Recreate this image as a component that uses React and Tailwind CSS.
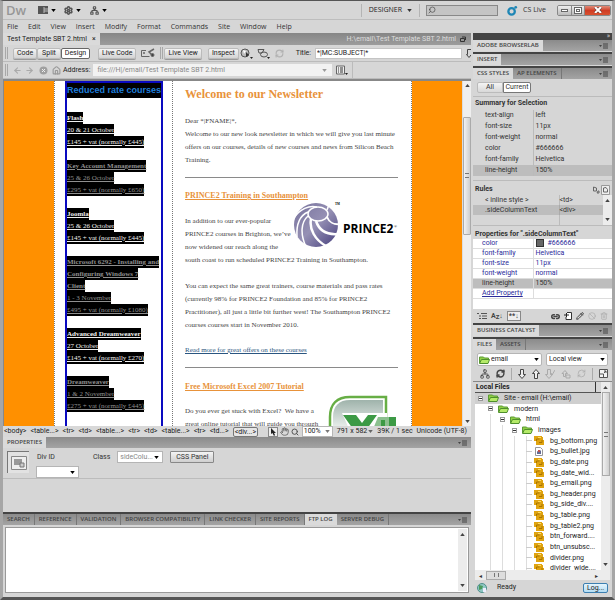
import { Settings, Network, Search, RefreshCw, ArrowLeft, ArrowRight, House, Hand, Link2, Pencil, Ban, Trash2 } from 'lucide-react'

const menus = ['File', 'Edit', 'View', 'Insert', 'Modify', 'Format', 'Commands', 'Site', 'Window', 'Help']

const courses = [
  { name: 'Flash', lines: ['20 & 21 October', '£145 + vat (normally £445)'] },
  { name: 'Key Account Management', dim: true, lines: ['25 & 26 October', '£295 + vat (normally £650)'] },
  { name: 'Joomla', lines: ['25 & 26 October', '£145 + vat (normally £445)'] },
  { name: 'Microsoft 6292 - Installing and|Configuring Windows 7|Client', dim: true, lines: ['1 - 3 November', '£495 + vat (normally £1080)'] },
  { name: 'Advanced Dreamweaver', lines: ['27 October', '£145 + vat (normally £270)'] },
  { name: 'Dreamweaver', dim: true, lines: ['1 & 2 November', '£275 + vat (normally £445)'] },
]

const tagPath = ['<body>', '<table...>', '<tr>', '<td>', '<table...>', '<tr>', '<td>', '<table...>', '<tr>', '<td...>']

const resultTabs = ['SEARCH', 'REFERENCE', 'VALIDATION', 'BROWSER COMPATIBILITY', 'LINK CHECKER', 'SITE REPORTS', 'FTP LOG', 'SERVER DEBUG']

const summary = [
  ['text-align', 'left'],
  ['font-size', '11px'],
  ['font-weight', 'normal'],
  ['color', '#666666'],
  ['font-family', 'Helvetica'],
  ['line-height', '150%'],
]

const properties = [
  ['color', '#666666'],
  ['font-family', 'Helvetica'],
  ['font-size', '11px'],
  ['font-weight', 'normal'],
  ['line-height', '150%'],
]

const subfolders = ['modern', 'html', 'images']

const files = [
  'bg_bottom.png', 'bg_bullet.jpg', 'bg_date.png', 'bg_date_wid...', 'bg_email.png', 'bg_header.png', 'bg_side_div....',
  'bg_table.png', 'bg_table2.png', 'btn_forward....', 'btn_unsubsc...', 'divider.png', 'divider_wide....',
]

function Caret({ className = 'text-black' }) {
  return (
    <svg viewBox="0 0 6 4" className={`h-[3px] w-[5px] shrink-0 ${className}`} aria-hidden="true">
      <path d="M0 0h6L3 4z" fill="currentColor" />
    </svg>
  )
}

function Grip() {
  return <span className="h-3 w-[3px] shrink-0 border-x border-[#a8a8a8]" />
}

function PanelMenu() {
  return (
    <button aria-label="Panel menu" className="ml-auto mr-1 flex items-center gap-px text-[#444]">
      <svg viewBox="0 0 9 6" className="h-[6px] w-[9px]">
        <path d="M0 2h3L1.500 4z" fill="currentColor" />
        <path d="M4 1h5M4 3h5M4 5h5" stroke="currentColor" />
      </svg>
    </button>
  )
}

function PanelTabs({ tabs, active }) {
  return (
    <div className="flex h-[11px] shrink-0 items-stretch bg-linear-to-b from-[#8b8b8b] to-[#a4a4a4] font-['Open_Sans',sans-serif] text-[6px] font-semibold leading-[11px]">
      {tabs.map((tab) => (
        <button
          key={tab}
          className={tab === active
            ? 'whitespace-nowrap bg-[#dadada] px-1 text-[#444]'
            : 'whitespace-nowrap border-r border-[#777] px-1 text-[#444]'}
        >
          {tab}
        </button>
      ))}
      <PanelMenu />
    </div>
  )
}

function Select({ label, value, className, children, caret }) {
  return (
    <span className={`flex items-center border border-[#b5b5b5] bg-white ${className}`}>
      {children}
      <select aria-label={label} className="min-w-0 flex-1 appearance-none bg-transparent outline-none">
        <option>{value}</option>
      </select>
      <Caret className={caret} />
    </span>
  )
}

function ScrollArrow({ up }) {
  return (
    <svg viewBox="0 0 6 4" className="h-[3px] w-[5px]" aria-hidden="true">
      <path d={up ? 'M0 4h6L3 0z' : 'M0 0h6L3 4z'} fill="#444" />
    </svg>
  )
}

function TitleBar() {
  return (
    <header className="flex h-[19px] shrink-0 items-center border-b border-[#bdbdbd] pl-[3px] pr-px font-['Open_Sans',sans-serif]">
      <span className="w-[32px] text-[13px] font-semibold leading-4 text-[#979797]">Dw</span>
      <button aria-label="Layout" className="flex w-[26px] items-center gap-[3px]">
        <svg viewBox="0 0 10 8" className="h-2 w-[10px]">
          <path d="M0 0h10v8H0z" fill="#555" />
          <path d="M6 1v6M6 3h4M6 5h4" stroke="#bbb" />
        </svg>
        <Caret />
      </button>
      <button aria-label="Extend" className="flex w-[26px] items-center gap-[3px]">
        <Settings size={9} strokeWidth={4} className="text-[#555]" />
        <Caret />
      </button>
      <button aria-label="Site" className="flex items-center gap-[3px]">
        <Network size={9} strokeWidth={3} className="text-[#555]" />
        <Caret />
      </button>
      <div className="ml-auto flex h-[13px] items-center border-x border-[#b4b4b4] px-[7px]">
        <button className="flex items-center gap-[5px] text-[7px] leading-3 text-[#222]">
          DESIGNER <Caret className="text-[#333]" />
        </button>
      </div>
      <label className="ml-[6px] flex h-[11px] w-[72px] items-center border border-[#888] bg-[#c4c4c4] pl-px">
        <Search size={8} className="-scale-x-100 text-[#444]" />
        <input aria-label="Search" className="min-w-0 flex-1 bg-transparent text-[7px] outline-none" />
      </label>
      <button className="ml-[9px] flex items-center gap-[5px] text-[7px] leading-3 text-[#333]">
        <svg viewBox="0 0 12 12" className="size-[11px]">
          <circle cx="5" cy="7" r="3.500" fill="none" stroke="#1e86b5" strokeWidth="2.500" />
          <circle cx="9.500" cy="2.500" r="1.500" fill="#1e86b5" />
        </svg>
        CS Live
      </button>
      <div className="ml-[11px] flex h-[11px] overflow-hidden rounded-[2px] border border-[#888]">
        <button aria-label="Minimize" className="flex w-[14px] items-center justify-center border-r border-[#888] bg-linear-to-b from-[#eee] to-[#bbb]">
          <span className="h-[3px] w-[7px] border border-[#666] bg-white" />
        </button>
        <button aria-label="Restore" className="flex w-[13px] items-center justify-center border-r border-[#888] bg-linear-to-b from-[#eee] to-[#bbb]">
          <span className="flex h-[7px] w-2 items-center justify-center border border-[#666] bg-white">
            <span className="h-[3px] w-1 border border-[#666]" />
          </span>
        </button>
        <button aria-label="Close" className="flex w-[25px] items-center justify-center bg-linear-to-b from-[#e08a78] via-[#cf3c25] to-[#d8502f]">
          <svg viewBox="0 0 8 6" className="h-[6px] w-2">
            <path d="M1 0l6 6M7 0L1 6" stroke="#533" strokeWidth="3" />
            <path d="M1 0l6 6M7 0L1 6" stroke="#fff" strokeWidth="2" />
          </svg>
        </button>
      </div>
    </header>
  )
}

const toolButton = 'h-[11px] rounded-[2px] border border-[#bbb] bg-linear-to-b from-[#f4f4f4] to-[#d4d4d4] px-[3px] leading-[9px] whitespace-nowrap shadow-[0_1px_0_#999]'

function DocumentToolbar() {
  return (
    <div className="flex h-[17px] shrink-0 items-center overflow-hidden border-b border-[#bbb] pl-[2px]">
      <Grip />
      <div className="ml-[5px] flex">
        <button className={`w-6 ${toolButton}`}>Code</button>
        <button className={`w-6 ${toolButton}`}>Split</button>
        <button className="h-[11px] w-[29px] whitespace-nowrap rounded-[2px] border border-[#666] bg-white leading-[9px]">Design</button>
      </div>
      <button className={`ml-[8px] ${toolButton}`}>Live Code</button>
      <svg viewBox="0 0 14 10" className="ml-[5px] h-[10px] w-[14px] shrink-0" fill="none" stroke="#666">
        <path d="M5 2.500H.5v6h8" />
        <path d="M2 5h2M13 1L8 4l4 4" strokeWidth="1.500" />
        <circle cx="11.500" cy="7" r="1.500" fill="#444" />
      </svg>
      <span className="ml-[5px] flex"><Grip /></span>
      <button className={`ml-px ${toolButton}`}>Live View</button>
      <button className={`ml-[6px] ${toolButton}`}>Inspect</button>
      <svg viewBox="0 0 13 11" className="ml-px h-[11px] w-[13px] shrink-0">
        <circle cx="5" cy="5" r="4" fill="#bbb" stroke="#555" />
        <path d="M3 2l3 1-2 3z" fill="#fff" />
        <path d="M6 4l3 3-3 2z" fill="#333" />
        <path d="M10 9h3l-1.500 2z" fill="#222" />
      </svg>
      <svg viewBox="0 0 13 11" className="ml-1 h-[11px] w-[13px] shrink-0" fill="none" stroke="#555">
        <path d="M1 1.500h6L5 5H2z" />
        <ellipse cx="7" cy="6.500" rx="3.500" ry="2.500" />
        <path d="M10 9h3l-1.500 2z" fill="#222" stroke="none" />
      </svg>
      <RefreshCw size={9} strokeWidth={3} className="ml-[5px] shrink-0 text-[#b0b0b0]" />
      <label className="ml-auto flex items-center gap-1 pl-2">
        Title:
        <input defaultValue="*|MC:SUBJECT|*" className="h-[11px] w-[147px] border border-[#c4c4c4] bg-white px-px text-[7px] outline-none" />
      </label>
      <svg viewBox="0 0 5 9" className="ml-1 h-[9px] w-[5px] shrink-0" fill="none" stroke="#444">
        <path d="M1.500.5v5H.5L3 8.500 5 6M1.500.5H5" />
      </svg>
    </div>
  )
}

function AddressBar() {
  return (
    <div className="flex h-[17px] shrink-0 items-center border-b border-[#bbb] pl-[2px]">
      <Grip />
      <button aria-label="Back" className="ml-[5px]"><ArrowLeft size={9} className="text-[#aaa]" strokeWidth={3} /></button>
      <button aria-label="Forward" className="ml-[3px]"><ArrowRight size={9} className="text-[#aaa]" strokeWidth={3} /></button>
      <svg viewBox="0 0 9 9" className="ml-[5px] size-[9px]">
        <circle cx="4.500" cy="4.500" r="4" fill="#a0a0a0" />
        <path d="M3 3l3 3M6 3L3 6" stroke="#eee" />
      </svg>
      <button aria-label="Home" className="ml-[4px]"><House size={9} className="text-[#999]" strokeWidth={3} /></button>
      <label className="ml-[2px] flex items-center gap-[3px]">
        Address:
        <input defaultValue="file:///H|/email/Test Template SBT 2.html" className="h-[12px] w-[229px] bg-[#f2f2f2] px-1 text-[7px] text-[#888] outline-none" />
      </label>
      <span className="flex h-[12px] w-[10px] items-center justify-start bg-[#f2f2f2]"><Caret className="text-[#999]" /></span>
      <svg viewBox="0 0 12 10" className="ml-1 h-[10px] w-3">
        <path d="M.5 1h8v8h-8z" fill="#eee" stroke="#666" />
        <path d="M2 3h1m1 0h3M2 5h1m1 0h3M2 7h1m1 0h3" stroke="#333" />
        <path d="M9 8h3l-1.500 2z" fill="#222" />
      </svg>
      <span className="ml-1 h-full w-px bg-[#bbb]" />
    </div>
  )
}

function PrinceLogo() {
  return (
    <svg viewBox="0 0 105 45" className="float-right -ml-5 h-[45px] w-[105px]" role="img" aria-label="PRINCE2">
      <defs>
        <linearGradient id="globe" x1="0" y1="0" x2="1" y2="1">
          <stop offset="0" stopColor="#77729c" />
          <stop offset=".5" stopColor="#9590b4" />
          <stop offset="1" stopColor="#443d7c" />
        </linearGradient>
      </defs>
      <circle cx="23" cy="23" r="22" fill="url(#globe)" />
      <g fill="none" stroke="#fff" strokeWidth="1.500">
        <ellipse cx="25" cy="12" rx="10" ry="7" />
        <path d="M15 10C8 13 3 20 4 35" />
        <path d="M15 14C8 20 7 32 13 45" />
        <path d="M18 17C16 27 22 38 33 44" strokeWidth="2.500" />
        <path d="M23 19C26 28 33 33 45 32" strokeWidth="2.500" />
        <path d="M34 15C36 20 41 23 47 22" strokeWidth="2" />
        <path d="M24 5C16 3 7 7 1 16" />
        <path d="M34 8L37 0" />
      </g>
      <path d="M36 0l11 14V0z" fill="#fff" />
      <text x="42" y="3" fontSize="3" fontWeight="700">TM</text>
      <text x="50" y="31" fontSize="12" fontWeight="700" className="font-['Open_Sans',sans-serif]">PRINCE2</text>
      <text x="101" y="26" fontSize="4">®</text>
    </svg>
  )
}

function ExcelLogo() {
  return (
    <svg viewBox="0 0 70 34" className="float-right -ml-5 mt-[2px] h-[34px] w-[70px]" role="img" aria-label="Excel">
      <defs>
        <linearGradient id="sheet" x1="0" y1="0" x2="0" y2="1">
          <stop offset="0" stopColor="#9fb3ab" />
          <stop offset="1" stopColor="#f3f6f4" />
        </linearGradient>
      </defs>
      <path d="M2 36V22C2 9 9 2 22 2h36v34z" fill="#fff" stroke="#67ae45" strokeWidth="2.500" />
      <path d="M5 36V22C5 11 11 5 22 5h33v31z" fill="url(#sheet)" />
      <path d="M14 18h45v18H22z" fill="#fff" />
      <path d="M15 20h13l6 8 6-8h9L39 34H25z" fill="#3c9a45" />
      <path d="M50 22h18v12H45z" fill="#8cc08f" />
      <path d="M53 25h4v6h-4zM61 22h7v9h-7z" fill="#3c9a45" />
    </svg>
  )
}

function Sidebar() {
  return (
    <div className="ml-[10px] w-[98px] shrink-0 overflow-hidden border-2 border-b-0 border-[#0a0ac0]">
      <h2 className="mb-[14px] h-[15px] whitespace-nowrap bg-black font-['Liberation_Sans',Arial,sans-serif] text-[9px] font-bold leading-[15px] text-[#1f7fdc]">
        Reduced rate courses
      </h2>
      {courses.map((course) => (
        <p key={course.name} className={course.dim ? 'mb-3 text-[7px] leading-3 text-[#8f8f8f]' : 'mb-3 text-[7px] leading-3 text-[#f0f0f0]'}>
          {course.name.split('|').map((part) => (
            <span key={part} className="block w-fit whitespace-nowrap bg-black font-bold underline">
              {part}
            </span>
          ))}
          {course.lines.map((line) => (
            <span key={line} className="block w-fit whitespace-nowrap bg-black underline">{line}</span>
          ))}
        </p>
      ))}
    </div>
  )
}

function Newsletter() {
  return (
    <article className="ml-[9px] w-[238px] shrink-0 border-l border-dotted border-[#777] pl-3 pr-3 text-[7px] leading-[13px] text-[#444]">
      <h1 className="mb-[13px] mt-[5px] text-[12px] font-bold leading-4 text-[#e8923a]">Welcome to our Newsletter</h1>
      <p className="whitespace-nowrap">
        Dear *|FNAME|*,<br />
        Welcome to our new look newsletter in which we will give you last minute<br />
        offers on our courses, details of new courses and news from Silicon Beach<br />
        Training.
      </p>
      <hr className="mb-[11px] mt-[10px] border-[#8a8a8a]" />
      <h2 className="whitespace-nowrap text-[8px] font-bold">
        <a href="#prince2" className="text-[#e8923a] underline">PRINCE2 Training in Southampton</a>
      </h2>
      <PrinceLogo />
      <p className="mt-[13px] whitespace-nowrap">
        In addition to our ever-popular<br />
        PRINCE2 courses in Brighton, we’ve<br />
        now widened our reach along the<br />
        south coast to run scheduled PRINCE2 Training in Southampton.
      </p>
      <p className="mt-[13px] whitespace-nowrap">
        You can expect the same great trainers, course materials and pass rates<br />
        (currently 98% for PRINCE2 Foundation and 85% for PRINCE2<br />
        Practitioner), all just a little bit further west! The Southampton PRINCE2<br />
        courses courses start in November 2010.
      </p>
      <a href="#offers" className="mt-3 block text-[#2a5580] underline">Read more for great offers on these courses</a>
      <hr className="mb-3 mt-[10px] border-[#8a8a8a]" />
      <h2 className="whitespace-nowrap text-[8px] font-bold">
        <a href="#excel" className="text-[#e8923a] underline">Free Microsoft Excel 2007 Tutorial</a>
      </h2>
      <ExcelLogo />
      <p className="mt-3 whitespace-nowrap">
        Do you ever get stuck with Excel?&nbsp; We have a<br />
        great online tutorial that will guide you through
      </p>
    </article>
  )
}

function DesignView() {
  return (
    <div className="flex min-h-0 flex-1 border-l border-t-2 border-[#888] bg-white">
      <div className="flex min-w-0 flex-1 overflow-hidden font-['Liberation_Serif','Times_New_Roman',serif]">
        <div className="flex-1 bg-[#ff9000]" />
        <div className="flex w-[358px] shrink-0 overflow-hidden border-x border-dotted border-[#777]">
          <Sidebar />
          <Newsletter />
        </div>
        <div className="flex-1 bg-[#ff9000]" />
      </div>
      <div className="flex w-[9px] shrink-0 flex-col items-center justify-between border-l border-[#ddd] bg-[#efefef] py-[3px]">
        <ScrollArrow up />
        <div className="mb-[156px] flex h-[118px] w-2 items-center justify-center rounded-[1px] border border-[#aaa] bg-linear-to-r from-[#f2f2f2] to-[#cfcfcf]">
          <span className="h-[5px] w-1 border-y border-[#777]" />
        </div>
        <ScrollArrow />
      </div>
    </div>
  )
}

function StatusBar() {
  return (
    <div className="flex h-[11px] shrink-0 items-center gap-1 overflow-hidden whitespace-nowrap bg-[#d8d8d8] px-px text-[7px] leading-[11px] text-[#222]">
      {tagPath.map((tag, i) => <button key={i}>{tag}</button>)}
      <button className="h-[10px] rounded-[2px] border border-[#777] bg-[#e6e6e6] px-px leading-[8px]">{'<div...>'}</button>
      <div className="ml-auto flex items-center gap-[2px]">
        <button aria-label="Select" className="flex size-[10px] items-center justify-center border border-[#888] bg-[#eee]">
          <svg viewBox="0 0 6 8" className="h-2 w-[6px]"><path d="M1 0v6l1.500-1L4 8l1-1-1-2h2z" fill="#222" /></svg>
        </button>
        <Hand size={9} className="text-[#555]" />
        <Search size={8} strokeWidth={3} className="text-[#555]" />
        <Select label="Zoom" value="100%" className="ml-px h-[11px] w-[31px] pl-px pr-[2px]" caret="text-[#777]" />
      </div>
      <span className="flex items-center gap-px">791 x 582 <Caret className="text-[#666]" /></span>
      <span>39K / 1 sec</span>
      <span className="mr-[3px]">Unicode (UTF-8)</span>
    </div>
  )
}

function PropertiesPanel() {
  return (
    <section>
      <PanelTabs tabs={['PROPERTIES']} active="PROPERTIES" />
      <div className="flex h-[31px] border-b border-[#bcbcbc] px-1 pt-[3px] text-[7px] leading-[12px] text-[#333]">
        <div className="flex size-[22px] items-center justify-center border-l border-t border-[#777] bg-[#e2e2e2]">
          <svg viewBox="0 0 16 14" className="h-[14px] w-4">
            <path d="M.5.5h15v13H.5z" fill="#eee" stroke="#888" />
            <path d="M3 3h8v6H3z" fill="#999" />
            <path d="M9 7h4v4H9z" fill="#ccc" stroke="#777" />
          </svg>
        </div>
        <div className="ml-[7px] w-[43px]">
          <span className="block pl-px">Div ID</span>
          <Select label="Div ID" value="" className="mt-[3px] h-3 px-px pr-[3px]" />
        </div>
        <div className="ml-[14px] flex h-3 items-center gap-[7px]">
          Class
          <Select label="Class" value="sideColu..." className="h-3 w-[46px] pl-[2px] pr-[3px] text-[#888]" />
        </div>
        <button className="ml-[7px] h-3 whitespace-nowrap rounded-[1px] border border-[#888] bg-linear-to-b from-[#f4f4f4] to-[#cfcfcf] px-[5px] leading-[10px]">
          CSS Panel
        </button>
      </div>
      <div className="h-[33px]" />
    </section>
  )
}

function Results() {
  return (
    <section className="flex h-[83px] shrink-0 flex-col border-t-2 border-[#444]">
      <PanelTabs tabs={resultTabs} active="FTP LOG" />
      <div className="m-[2px] flex flex-1 border border-[#999] bg-white">
        <textarea aria-label="FTP log" className="min-w-0 flex-1 resize-none outline-none" />
        <div className="my-px mr-px flex w-[9px] flex-col items-center justify-between bg-[#ececec] py-1">
          <ScrollArrow up />
          <ScrollArrow />
        </div>
      </div>
    </section>
  )
}

function CssStyles() {
  return (
    <section className="text-[7px] text-[#333]">
      <PanelTabs tabs={['CSS STYLES', 'AP ELEMENTS']} active="CSS STYLES" />
      <div className="flex h-[18px] items-center border-b border-[#bbb] pl-1">
        <button className="h-[11px] w-[26px] rounded-l-[2px] border border-[#bbb] bg-linear-to-b from-[#f4f4f4] to-[#d8d8d8] leading-[9px]">All</button>
        <button className="h-[11px] w-[28px] rounded-r-[2px] border border-[#777] bg-white leading-[9px]">Current</button>
      </div>
      <h3 className="px-[2px] font-bold leading-3">Summary for Selection</h3>
      <table className="mb-1 mt-px w-full border-collapse leading-[11px]">
        <tbody>
          {summary.map(([name, value]) => (
            <tr key={name} className={name === 'line-height' ? 'bg-[#bdbdbd]' : ''}>
              <td className="w-[60px] border-r border-[#bbb] py-0 pl-3">{name}</td>
              <td className="py-0 pl-[2px]">{value}</td>
            </tr>
          ))}
        </tbody>
      </table>
      <div className="flex h-[15px] items-end border-t border-[#bbb] px-[2px]">
        <h3 className="font-bold leading-[11px]">Rules</h3>
        <svg viewBox="0 0 18 10" className="ml-auto h-[10px] w-[18px]" fill="none" stroke="#666">
          <path d="M1.500 2v4h3V3zM6 6h1v2H5z" />
          <path d="M9.500.5h8v9h-8z" fill="#eee" stroke="#999" />
          <path d="M11.500 3v4h4V4.500l-1.500-2z" />
        </svg>
      </div>
      <div className="flex">
        <table className="flex-1 border-collapse leading-[10px]">
          <tbody>
            <tr>
              <td className="w-[86px] border-r border-[#bbb] py-0 pl-3">{'< inline style >'}</td>
              <td className="py-0">{'<td>'}</td>
            </tr>
            <tr className="bg-[#bdbdbd]">
              <td className="border-r border-[#aaa] py-0 pl-3">.sideColumnText</td>
              <td className="py-0">{'<div>'}</td>
            </tr>
            <tr className="h-[10px]">
              <td className="border-r border-[#bbb] p-0" />
              <td className="p-0" />
            </tr>
          </tbody>
        </table>
        <div className="flex w-[9px] flex-col items-center justify-between bg-[#ececec] py-1">
          <ScrollArrow up />
          <ScrollArrow />
        </div>
      </div>
      <h3 className="border-t border-[#bbb] px-[2px] pt-[3px] font-bold leading-[10px]">Properties for ".sideColumnText"</h3>
      <div className="h-[70px] bg-white">
        <table className="w-full border-collapse leading-[9px] text-[#2b2b9a]">
          <tbody>
            {properties.map(([name, value]) => (
              <tr key={name} className={name === 'line-height' ? 'border-b border-[#ddd] bg-[#bdbdbd] text-[#333]' : 'border-b border-[#ddd]'}>
                <td className="w-[60px] border-r border-[#ddd] py-0 pl-[9px]">{name}</td>
                <td className="py-0 pl-[2px]">
                  {name === 'color' && <span className="mr-1 inline-block h-2 w-2 border border-[#333] bg-[#666] align-middle" />}
                  {value}
                </td>
              </tr>
            ))}
            <tr className="border-b border-[#ddd]">
              <td className="border-r border-[#ddd] py-0 pl-[9px]"><a href="#add" className="underline">Add Property</a></td>
              <td />
            </tr>
          </tbody>
        </table>
      </div>
      <div className="flex h-[14px] items-center gap-1 px-1 text-[#444]">
        <svg viewBox="0 0 10 8" className="h-2 w-[10px]" stroke="#555">
          <path d="M0 1.500h2m2 0h6M2 4h2m1 0h5M2 6.500h2m1 0h5" />
        </svg>
        <span className="font-bold">A<sub className="text-[6px]">Z</sub>↓</span>
        <span className="h-[10px] border border-[#888] bg-[#eee] px-px font-bold leading-[8px]">**↓</span>
        <div className="ml-auto flex items-center gap-1">
          <Link2 size={9} strokeWidth={4} />
          <svg viewBox="0 0 8 8" className="size-2"><path d="M3 .5h4.500v7H2V5" fill="#fff" stroke="#333" /><path d="M0 3h5M2.500 1v4" stroke="#222" /></svg>
          <Pencil size={8} strokeWidth={3} />
          <Ban size={8} className="text-[#aaa]" />
          <Trash2 size={8} className="text-[#aaa]" />
        </div>
      </div>
    </section>
  )
}

function FolderIcon() {
  return (
    <svg viewBox="0 0 11 8" className="h-2 w-[11px] shrink-0" aria-hidden="true">
      <path d="M.5 7V1h4l1 1h4v2" fill="#8fcf45" stroke="#5c9a35" />
      <path d="M.5 7.500L2.500 3.500h8l-1.500 4z" fill="#b5ea68" stroke="#4f8f2c" />
    </svg>
  )
}

function FileIcon({ jpg }) {
  if (jpg) {
    return (
      <svg viewBox="0 0 10 9" className="h-[9px] w-[10px] shrink-0" aria-hidden="true">
        <path d="M1.500.5h5l2 2v6h-7z" fill="#fff" stroke="#999" />
        <path d="M3 7V4l2 1 2-2v4z" fill="#636a94" />
        <path d="M4 3h2v2H4z" fill="#c0504d" />
      </svg>
    )
  }
  return (
    <svg viewBox="0 0 10 9" className="h-[9px] w-[10px] shrink-0" aria-hidden="true">
      <path d="M0 0h8v1h1v3h1v5H2V5H0z" fill="#e0a410" />
      <path d="M2.500 5V3h3M5 6.500h3V4" fill="none" stroke="#a87400" />
      <path d="M4 1h3v1H4z" fill="#ffdc60" />
    </svg>
  )
}

function Guides({ count }) {
  return Array.from({ length: count }, (_, i) => (
    <span key={i} className="w-3 shrink-0 self-stretch border-l border-[#ddd]" />
  ))
}

function Expander({ name }) {
  return (
    <button aria-label={`Collapse ${name}`} className="-ml-[2px] mr-[5px] flex size-[5px] shrink-0 items-center justify-center border border-[#999] bg-white">
      <span className="h-px w-[3px] bg-[#333]" />
    </button>
  )
}

function FilesPanel() {
  return (
    <section className="flex min-h-0 flex-1 flex-col text-[7px] text-[#222]">
      <PanelTabs tabs={['FILES', 'ASSETS']} active="FILES" />
      <div className="flex gap-1 px-1 pt-[3px]">
        <Select label="Site" value="email" className="h-[13px] flex-1 gap-px rounded-[2px] px-px pr-[2px]"><FolderIcon /></Select>
        <Select label="View" value="Local view" className="h-[13px] w-[62px] rounded-[2px] px-[2px]" />
      </div>
      <div className="flex h-[16px] items-center justify-between border-b border-[#888] pl-[7px] pr-1 text-[#444]">
        <Network size={10} strokeWidth={2} />
        <RefreshCw size={9} strokeWidth={4} />
        <span className="h-3 w-px bg-[#aaa]" />
        <svg viewBox="0 0 8 10" className="h-[10px] w-2" fill="#eee" stroke="#444"><path d="M2.500.5h3v5h2L4 9.500.5 5.500h2z" /></svg>
        <svg viewBox="0 0 8 10" className="h-[10px] w-2" fill="#eee" stroke="#444"><path d="M2.500 9.500h3v-5h2L4 .5.5 4.500h2z" /></svg>
        <svg viewBox="0 0 10 10" className="size-[10px]" fill="none" stroke="#aaa"><path d="M2.500.5h3v5h2L4 9.500.5 5.500h2zM6 4l1 2 3-5" /></svg>
        <svg viewBox="0 0 10 10" className="size-[10px]" fill="none" stroke="#aaa"><path d="M2.500 7.500h2v-3h2L4 1.500 1 4.500h1.500zM5 6h4v3H5z" /></svg>
        <RefreshCw size={9} className="text-[#aaa]" />
        <span className="h-3 w-px bg-[#aaa]" />
        <svg viewBox="0 0 9 9" className="size-[9px]" fill="#f4f4f4" stroke="#555"><path d="M.5.5h8v8h-8zM.5 5h4v3.500M5 4l2-2H5M7 2v2" /></svg>
      </div>
      <div className="mx-[2px] flex min-h-0 flex-1 bg-white">
        <div className="flex min-w-0 flex-1 flex-col overflow-hidden">
          <div className="flex h-[11px] shrink-0 border-b border-[#555] bg-[#d6d6d6] px-px font-bold leading-[10px]">
            <span className="flex-1">Local Files</span>
            <span className="mr-1 w-px bg-[#333]" />
          </div>
          <ul className="-mb-1 flex min-h-0 flex-1 flex-col whitespace-nowrap">
            <li className="flex min-h-0 flex-1 items-center bg-[#cfcfcf] pl-[5px]">
              <Expander name="site" />
              <FolderIcon />
              <span className="ml-[5px]">Site - email (H:\email)</span>
            </li>
            {subfolders.map((name, i) => (
              <li key={name} className="flex min-h-0 flex-1 items-center pl-[15px]">
                <Guides count={i} />
                <Expander name={name} />
                <FolderIcon />
                <span className="ml-[5px]">{name}</span>
              </li>
            ))}
            {files.map((name) => (
              <li key={name} className="flex min-h-0 flex-1 items-center pl-[15px]">
                <Guides count={4} />
                <span className="-ml-3 mr-[2px] h-px w-[6px] bg-[#ccc]" />
                <FileIcon jpg={name.endsWith('.jpg')} />
                <span className="ml-[6px]">{name}</span>
              </li>
            ))}
          </ul>
        </div>
        <div className="flex w-[9px] shrink-0 flex-col items-center bg-[#ececec] py-1">
          <ScrollArrow up />
          <div className="mt-[3px] flex h-[84px] w-2 items-center justify-center border border-[#aaa] bg-linear-to-r from-[#f2f2f2] to-[#cfcfcf]">
            <span className="h-[5px] w-1 border-y border-[#777]" />
          </div>
          <span className="flex-1" />
          <ScrollArrow />
        </div>
      </div>
      <div className="mx-[2px] flex h-[10px] shrink-0 items-center bg-[#ececec] px-1 text-[6px] text-[#333]">
        <span>◂</span>
        <span className="ml-1 flex h-[9px] w-5 items-center justify-center border border-[#aaa] bg-[#ddd]">
          <span className="h-1 w-[5px] border-x border-[#777]" />
        </span>
        <span className="ml-auto mr-2">▸</span>
      </div>
      <div className="flex h-[15px] shrink-0 items-center px-1">
        <svg viewBox="0 0 10 10" className="size-[10px]">
          <circle cx="5" cy="5" r="4.500" fill="#8fc7c4" stroke="#4f8f8c" />
          <path d="M2 2l4 1-1 3-3 1zM6 6h3v3H6z" fill="#4a9a5c" />
          <path d="M6 5h3v4H6z" fill="#eef" />
        </svg>
        <span className="ml-[10px]">Ready</span>
        <button className="ml-auto h-[10px] w-[25px] rounded-[2px] border border-[#3c7fb1] bg-linear-to-b from-[#e5f4fc] to-[#b3dcf2] leading-[8px]">Log...</button>
      </div>
    </section>
  )
}

export default function App() {
  return (
    <div className="flex h-screen w-full flex-col overflow-hidden border-x-[3px] border-b-[3px] border-t border-[#555] border-x-[#a6a6a6] bg-[#d6d6d6] pb-[2px] font-['Roboto',Tahoma,sans-serif] text-[#222]">
      <TitleBar />
      <nav className="flex h-[13px] shrink-0 items-center gap-[10px] px-1 font-['Open_Sans',sans-serif] text-[7px] leading-3 text-[#333]">
        {menus.map((name) => <button key={name}>{name}</button>)}
      </nav>
      <div className="flex min-h-0 flex-1">
        <main className="flex min-w-0 flex-1 flex-col text-[7px] leading-[11px]">
          <div className="flex h-3 shrink-0 items-center bg-linear-to-b from-[#868686] to-[#9c9c9c]">
            <div className="flex h-full items-center gap-[5px] whitespace-nowrap bg-[#dadada] px-1">
              Test Template SBT 2.html
              <button aria-label="Close tab">×</button>
            </div>
            <span className="ml-auto text-[#ddd]">H:\email\Test Template SBT 2.html</span>
            <svg viewBox="0 0 6 6" className="ml-1 mr-[5px] size-[6px]" fill="none" stroke="#333">
              <path d="M2 1h3.500v3M.5 2.500h4v3h-4z" />
            </svg>
          </div>
          <DocumentToolbar />
          <AddressBar />
          <DesignView />
          <StatusBar />
          <PropertiesPanel />
          <Results />
        </main>
        <aside className="ml-[2px] flex w-[139px] shrink-0 flex-col">
          <div className="flex h-[7px] shrink-0 items-center justify-end bg-[#444] pr-[2px] text-[7px] leading-[7px] text-[#ccc]">»</div>
          <PanelTabs tabs={['ADOBE BROWSERLAB']} active="ADOBE BROWSERLAB" />
          <div className="h-[3px] shrink-0 border-b-2 border-[#444]" />
          <PanelTabs tabs={['INSERT']} active="INSERT" />
          <div className="h-[3px] shrink-0 border-b-2 border-[#444]" />
          <CssStyles />
          <div className="h-[2px] shrink-0 bg-[#444]" />
          <PanelTabs tabs={['BUSINESS CATALYST']} active="BUSINESS CATALYST" />
          <div className="h-[3px] shrink-0 border-b-2 border-[#444]" />
          <FilesPanel />
        </aside>
      </div>
    </div>
  )
}
